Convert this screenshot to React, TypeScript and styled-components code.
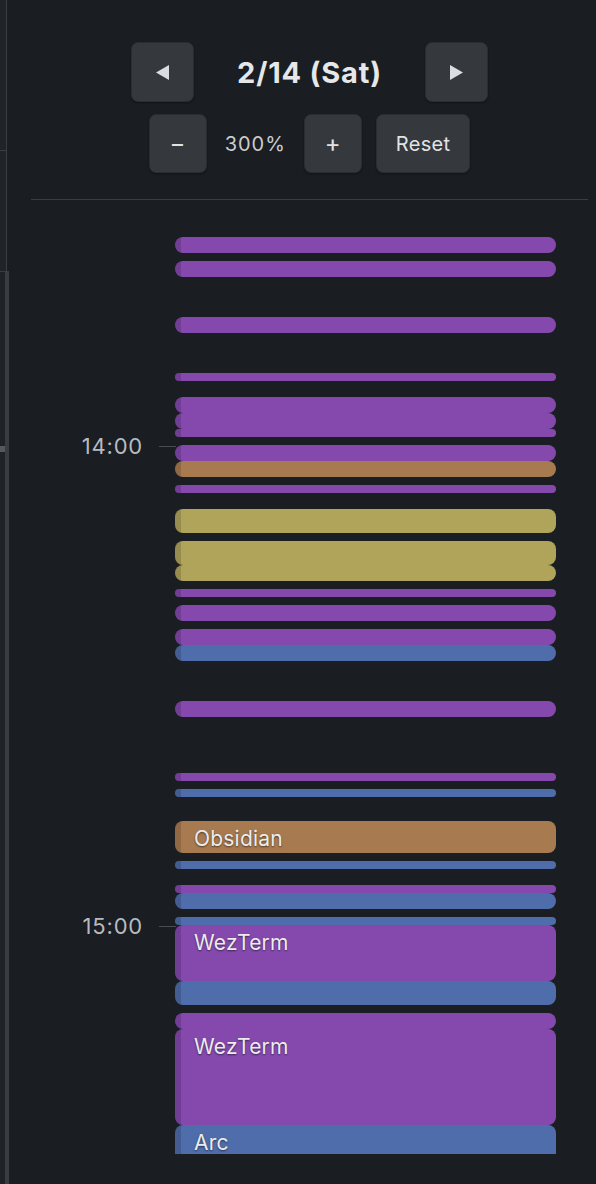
import styled, { createGlobalStyle } from "styled-components";

const PX_PER_MIN = 8;
const SCROLL_OFFSET = 235;

const colors = {
  purple: "#8549ae",
  orange: "#a87a50",
  yellow: "#b0a35a",
  blue: "#4f6dab",
};

type Activity = {
  start: number; // minutes since 13:00
  end: number;
  color: keyof typeof colors;
  app?: string;
};

const activities: Activity[] = [
  { start: 34, end: 36, color: "purple" },
  { start: 37, end: 39, color: "purple" },
  { start: 44, end: 46, color: "purple" },
  { start: 51, end: 52, color: "purple" },
  { start: 54, end: 56, color: "purple" },
  { start: 56, end: 58, color: "purple" },
  { start: 58, end: 59, color: "purple" },
  { start: 60, end: 62, color: "purple" },
  { start: 62, end: 64, color: "orange" },
  { start: 65, end: 66, color: "purple" },
  { start: 68, end: 71, color: "yellow" },
  { start: 72, end: 75, color: "yellow" },
  { start: 75, end: 77, color: "yellow" },
  { start: 78, end: 79, color: "purple" },
  { start: 80, end: 82, color: "purple" },
  { start: 83, end: 85, color: "purple" },
  { start: 85, end: 87, color: "blue" },
  { start: 92, end: 94, color: "purple" },
  { start: 101, end: 102, color: "purple" },
  { start: 103, end: 104, color: "blue" },
  { start: 107, end: 111, color: "orange", app: "Obsidian" },
  { start: 112, end: 113, color: "blue" },
  { start: 115, end: 116, color: "purple" },
  { start: 116, end: 118, color: "blue" },
  { start: 119, end: 120, color: "blue" },
  { start: 120, end: 127, color: "purple", app: "WezTerm" },
  { start: 127, end: 130, color: "blue" },
  { start: 131, end: 133, color: "purple" },
  { start: 133, end: 145, color: "purple", app: "WezTerm" },
  { start: 145, end: 155, color: "blue", app: "Arc" },
];

// only the hours inside the visible window
const hours = [
  { label: "14:00", min: 60 },
  { label: "15:00", min: 120 },
];

const GlobalStyle = createGlobalStyle`
  html, body {
    margin: 0;
    padding: 0;
    background: #1a1d21;
  }
  body {
    font-family: "Inter", "Noto Sans", sans-serif;
  }
`;

const Page = styled.div`
  display: flex;
  width: 596px;
  height: 1184px;
  overflow: hidden;
  background: #1a1d21;
`;

const Sidebar = styled.div`
  width: 9px;
  flex-shrink: 0;
  display: flex;
  flex-direction: column;
`;

const SideBlock = styled.div<{ $h: number; $top?: boolean }>`
  height: ${(p) => p.$h}px;
  width: 7px;
  margin-right: 1px;
  background: #202327;
  border-right: 1px solid #3a3d42;
  border-top: ${(p) => (p.$top ? "none" : "1px solid #3a3d42")};
  box-sizing: border-box;
`;

const SideRest = styled.div`
  flex: 1;
  width: 5px;
  background: #1f2226;
  border-right: 4px solid #393c41;
  border-top: 1px solid #3a3d42;
`;

const SideMarker = styled.div`
  margin-top: 174px;
  width: 5px;
  height: 6px;
  background: #55585d;
`;

const Main = styled.main`
  flex: 1;
  display: flex;
  flex-direction: column;
  padding: 42px 8px 30px 22px;
  min-width: 0;
`;

const NavRow = styled.div`
  display: flex;
  justify-content: center;
  align-items: center;
  gap: 43px;
`;

const ZoomRow = styled.div`
  display: flex;
  justify-content: center;
  align-items: center;
  gap: 14px;
  margin-top: 12px;
`;

const Button = styled.button<{ $w?: number; $h?: number; $fs?: number }>`
  display: inline-flex;
  align-items: center;
  justify-content: center;
  min-width: ${(p) => p.$w ?? 58}px;
  height: ${(p) => p.$h ?? 59}px;
  padding: 0 19px;
  box-sizing: border-box;
  background: #35383d;
  border: 1px solid #2a2d31;
  border-radius: 7px;
  box-shadow: 0 1px 2px rgba(0, 0, 0, 0.35);
  color: #e2e3e5;
  font-family: "Inter", "Noto Sans", sans-serif;
  font-size: ${(p) => p.$fs ?? 20}px;
  letter-spacing: 0.3px;
  cursor: pointer;
`;

const DateTitle = styled.h2`
  margin: 0;
  font-size: 29px;
  font-weight: 700;
  color: #e6e7e9;
  letter-spacing: 0.8px;
`;

const ZoomValue = styled.span`
  padding: 0 4px;
  font-size: 20px;
  letter-spacing: 1px;
  color: #c9ccd1;
`;

const Divider = styled.hr`
  margin: 26px 0 0;
  border: none;
  height: 1px;
  background: #3a3d42;
`;

const Scroller = styled.div`
  flex: 1;
  position: relative;
  overflow: hidden;
`;

const Canvas = styled.div`
  position: relative;
  height: ${PX_PER_MIN * 180}px;
  margin-top: -${SCROLL_OFFSET}px;
`;

const HourLabel = styled.div`
  position: absolute;
  left: 0;
  width: 112px;
  text-align: right;
  font-size: 22px;
  line-height: 22px;
  letter-spacing: 0.8px;
  color: #b7bbc1;
`;

const HourTick = styled.div`
  position: absolute;
  left: 128px;
  width: 17px;
  height: 1px;
  background: #4a4d52;
`;

const Block = styled.div<{ $color: string }>`
  position: absolute;
  left: 144px;
  width: 381px;
  box-sizing: border-box;
  border-radius: 8px;
  background: ${(p) => p.$color};
  overflow: hidden;
  padding: 6px 0 0 19px;
  font-size: 21px;
  line-height: 24px;
  letter-spacing: 0.2px;
  color: #ececee;
  text-shadow: 0 1px 2px rgba(0, 0, 0, 0.55);
  white-space: nowrap;

  &::before {
    content: "";
    position: absolute;
    left: 0;
    top: 0;
    bottom: 0;
    width: 6px;
    background: rgba(0, 0, 0, 0.14);
  }
`;

const Triangle = ({ dir }: { dir: "left" | "right" }) => (
  <svg width="15" height="15" viewBox="0 0 15 15">
    <polygon
      points={dir === "left" ? "14,0 14,15 1,7.5" : "1,0 1,15 14,7.5"}
      fill="#dcdde0"
    />
  </svg>
);

export default function App() {
  return (
    <>
      <GlobalStyle />
      <Page>
        <Sidebar>
          <SideBlock $h={150} $top />
          <SideBlock $h={121} />
          <SideRest>
            <SideMarker />
          </SideRest>
        </Sidebar>
        <Main>
          <NavRow>
            <Button $w={63} $h={60} aria-label="previous day">
              <Triangle dir="left" />
            </Button>
            <DateTitle>2/14 (Sat)</DateTitle>
            <Button $w={63} $h={60} aria-label="next day">
              <Triangle dir="right" />
            </Button>
          </NavRow>
          <ZoomRow>
            <Button $fs={24}>−</Button>
            <ZoomValue>300%</ZoomValue>
            <Button $fs={24}>+</Button>
            <Button>Reset</Button>
          </ZoomRow>
          <Divider />
          <Scroller>
            <Canvas>
              {hours.map((h) => (
                <div key={h.label}>
                  <HourLabel style={{ top: h.min * PX_PER_MIN - 10 }}>
                    {h.label}
                  </HourLabel>
                  <HourTick style={{ top: h.min * PX_PER_MIN + 1 }} />
                </div>
              ))}
              {activities.map((a, i) => (
                <Block
                  key={i}
                  $color={colors[a.color]}
                  style={{
                    top: a.start * PX_PER_MIN,
                    height: (a.end - a.start) * PX_PER_MIN,
                  }}
                >
                  {a.app}
                </Block>
              ))}
            </Canvas>
          </Scroller>
        </Main>
      </Page>
    </>
  );
}
